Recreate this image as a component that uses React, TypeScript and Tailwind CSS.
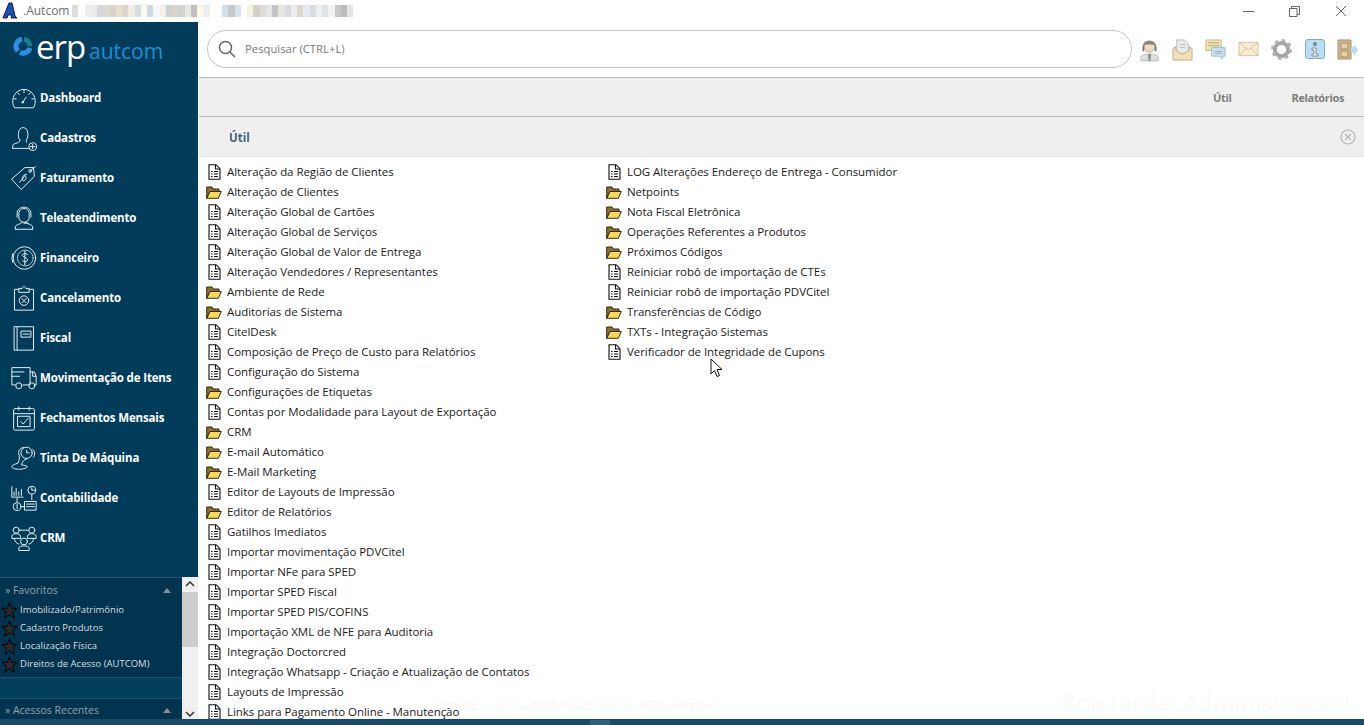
import { FC, ReactNode } from "react";

type ListItem = { label: string; folder?: boolean };

const columnOne: ListItem[] = [
  { label: "Alteração da Região de Clientes" },
  { label: "Alteração de Clientes", folder: true },
  { label: "Alteração Global de Cartões" },
  { label: "Alteração Global de Serviços" },
  { label: "Alteração Global de Valor de Entrega" },
  { label: "Alteração Vendedores / Representantes" },
  { label: "Ambiente de Rede", folder: true },
  { label: "Auditorias de Sistema", folder: true },
  { label: "CitelDesk" },
  { label: "Composição de Preço de Custo para Relatórios" },
  { label: "Configuração do Sistema" },
  { label: "Configurações de Etiquetas", folder: true },
  { label: "Contas por Modalidade para Layout de Exportação" },
  { label: "CRM", folder: true },
  { label: "E-mail Automático", folder: true },
  { label: "E-Mail Marketing", folder: true },
  { label: "Editor de Layouts de Impressão" },
  { label: "Editor de Relatórios", folder: true },
  { label: "Gatilhos Imediatos" },
  { label: "Importar movimentação PDVCitel" },
  { label: "Importar NFe para SPED" },
  { label: "Importar SPED Fiscal" },
  { label: "Importar SPED PIS/COFINS" },
  { label: "Importação XML de NFE para Auditoria" },
  { label: "Integração Doctorcred" },
  { label: "Integração Whatsapp - Criação e Atualização de Contatos" },
  { label: "Layouts de Impressão" },
  { label: "Links para Pagamento Online - Manutenção" },
];

const columnTwo: ListItem[] = [
  { label: "LOG Alterações Endereço de Entrega - Consumidor" },
  { label: "Netpoints", folder: true },
  { label: "Nota Fiscal Eletrônica", folder: true },
  { label: "Operações Referentes a Produtos", folder: true },
  { label: "Próximos Códigos", folder: true },
  { label: "Reiniciar robô de importação de CTEs" },
  { label: "Reiniciar robô de importação PDVCitel" },
  { label: "Transferências de Código", folder: true },
  { label: "TXTs - Integração Sistemas", folder: true },
  { label: "Verificador de Integridade de Cupons" },
];

const Line: FC<{ children: ReactNode }> = ({ children }) => (
  <svg width="26" height="26" viewBox="0 0 30 30" fill="none" stroke="#e4ecf0" strokeWidth="1.150" strokeLinecap="round" strokeLinejoin="round">
    {children}
  </svg>
);

const navItems: { label: string; icon: ReactNode }[] = [
  {
    label: "Dashboard",
    icon: (
      <Line>
        <path d="M4 26 C0 22 1 6 15 5 C29 6 30 22 26 26 Z" />
        <path d="M4 16h2M24 16h2M8 9l1.500 2M22 9l-1.500 2M15 6v3M13.500 20l4-6" />
        <circle cx="13.500" cy="20" r="1" />
      </Line>
    ),
  },
  {
    label: "Cadastros",
    icon: (
      <Line>
        <path d="M2 27v-3c0-3 7-3 8-5 1-1 0-2-1-4-1-3-1-12 5-12s6 9 5 12c-1 2-2 3-1 5" />
        <path d="M2 27h18" />
        <circle cx="25" cy="25" r="4.500" />
        <path d="M25 22.500v5M22.500 25h5" />
      </Line>
    ),
  },
  {
    label: "Faturamento",
    icon: (
      <Line>
        <path d="M1 16 16 3l10 0 1 10-15 15Z" />
        <circle cx="22" cy="7" r="1.500" />
        <path d="M23 6l5-4M18 11c-3-2-7 6-4 7s4-4 3-5M10 20l7-9" />
      </Line>
    ),
  },
  {
    label: "Teleatendimento",
    icon: (
      <Line>
        <path d="M9 10c0-8 12-8 12 0v4c0 4-3 6-6 6s-6-2-6-6Z" />
        <path d="M7 14v-4c0-10 16-10 16 0v4M15 21h5M5 28v-3c0-2 6-3 8-5M25 28v-3c0-2-6-3-8-5M5 28h20" />
      </Line>
    ),
  },
  {
    label: "Financeiro",
    icon: (
      <Line>
        <circle cx="15.500" cy="15" r="13" />
        <circle cx="16.500" cy="15" r="9" strokeDasharray="1 1.500" />
        <path d="M2 10l-1 5 1 5M19 11c-2-2-6-1-6 1s6 2 6 5-4 3-6 1M16 7v16" />
      </Line>
    ),
  },
  {
    label: "Cancelamento",
    icon: (
      <Line>
        <path d="M9 5H4v24h22V5h-5" />
        <path d="M9 8V4h4c0-3 4-3 4 0h4v4Z" />
        <circle cx="15" cy="18" r="5.500" />
        <path d="M12.500 15.500l5 5M17.500 15.500l-5 5" />
      </Line>
    ),
  },
  {
    label: "Fiscal",
    icon: (
      <Line>
        <path d="M4 2h22v27H4ZM7 2v27" />
        <path d="M12 7h11v7H12Z" />
        <path d="M14 10.500h7" />
      </Line>
    ),
  },
  {
    label: "Movimentação de Itens",
    icon: (
      <Line>
        <path d="M5 23H1V3h21v20h-8M1 8h14M1 13h9M22 8h5l2 5v10h-2" />
        <path d="M25 8v5h4" />
        <circle cx="9" cy="24" r="3.500" />
        <circle cx="24" cy="24" r="3.500" />
      </Line>
    ),
  },
  {
    label: "Fechamentos Mensais",
    icon: (
      <Line>
        <rect x="3" y="4" width="24" height="25" rx="2" />
        <path d="M3 10h24M9 2v4M21 2v4" />
        <path d="M8 13h14v12H8Z" />
        <path d="M11 19l3 3 6-7" />
      </Line>
    ),
  },
  {
    label: "Tinta De Máquina",
    icon: (
      <Line>
        <path d="M15 3c-4 0-7 3-6 7 1 3 1 7-1 11-3 1-7 2-7 4s5 3 9 3 9-2 9-3-5-2-7-2c1-4 3-6 6-7" />
        <circle cx="18" cy="9" r="6.500" />
        <path d="M18 6v3h3M25 5c3 2 3 6 1 9" />
      </Line>
    ),
  },
  {
    label: "Contabilidade",
    icon: (
      <Line>
        <path d="M1 2v12h13M3.500 12V8M6 12V4M9 12V8M12 12V5" />
        <circle cx="24" cy="6" r="4.500" />
        <path d="M24 3v3h3M24 11v6M7 15v5M12 25h4" />
        <circle cx="7" cy="25" r="4.500" />
        <path d="M7 22.500v5" />
        <path d="M16 19h13v10H16ZM18 22h9M18 25h9" />
      </Line>
    ),
  },
  {
    label: "CRM",
    icon: (
      <Line>
        <circle cx="6" cy="6" r="3.500" />
        <path d="M1 15v-2c0-2 3-3 5-3s5 1 5 3v2Z" />
        <circle cx="24" cy="6" r="3.500" />
        <path d="M19 15v-2c0-2 3-3 5-3s5 1 5 3v2Z" />
        <circle cx="15" cy="19" r="4" />
        <path d="M9 29v-2c0-2 3-3 6-3s6 1 6 3v2ZM10 6h10M4 16c0 3 2 5 5 6M26 16c0 3-2 5-5 6" />
      </Line>
    ),
  },
];

const favorites = ["Imobilizado/Patrimônio", "Cadastro Produtos", "Localização Física", "Direitos de Acesso (AUTCOM)"];

// mosaico borrado do titulo da janela
const mosaic = [
  "#dcdcdc", "#ffffff", "#eeeeee", "#e8eaec", "#d4d8dc", "#ded9d2", "#d8d4cc", "#e6e0cc", "#dad6cc", "#f0eee4", "#d6dce2", "#fafaf0", "#d0d8e0", "#f6f6f6", "#f4f0e8", "#cfcfcf",
  "#d8d4cc", "#d2d2d2", "#e8e8e0", "#bfbfbf", "#fbf8e8", "#eeeeee", "#ffffff", "#ffffff", "#d0e0ec", "#c9c9c9", "#d4e4f0", "#ffffff", "#f4f2e0", "#d4d0c8", "#dcdcd8", "#e6e6e6",
  "#c4c4c4", "#e6e6e2", "#d8dcdc", "#ececec", "#dcd8cc", "#e6eaee", "#d6dce0", "#f0f0f0", "#dce4ea", "#f2f2f2", "#c8c8c8", "#bbbbbb", "#e4e4e4", "#ffffff",
];

const DocIcon: FC = () => (
  <svg width="13" height="16" viewBox="0 0 13 16" fill="none" stroke="#111" strokeWidth="1.100">
    <path d="M1 .7h7l4 4V15.300H1Z" fill="#fff" />
    <path d="M7.500 .7v4.300H12" />
    <path d="M3 7.500h1.500M6 7.500h4M3 10h1.500M6 10h4M3 12.500h1.500M6 12.500h4" strokeWidth="1.200" />
  </svg>
);

const FolderIcon: FC = () => (
  <svg width="16" height="13" viewBox="0 0 16 13">
    <path d="M.7 12.300V1h5.300l1 2h6v3H4Z" fill="#8c7428" stroke="#1f1a08" strokeWidth=".9" />
    <path d="M.8 12.300 4 5.500h11.300l-3 6.800Z" fill="#fbd85a" stroke="#1f1a08" strokeWidth=".9" />
  </svg>
);

const Row: FC<{ item: ListItem }> = ({ item }) => (
  <li className="flex h-5 items-center">
    <span className="flex w-[21px] justify-center pr-[5px]">{item.folder ? <FolderIcon /> : <DocIcon />}</span>
    <span className="whitespace-nowrap text-[11.500px] tracking-[-0.05px] text-[#1c1c1c]">{item.label}</span>
  </li>
);

const TopIcon: FC<{ children: ReactNode }> = ({ children }) => (
  <span className="flex w-[33px] shrink-0 justify-center">{children}</span>
);

const TopIcons: FC = () => (
  <div className="ml-px flex items-center opacity-80">
    <TopIcon>
      <svg width="21" height="25" viewBox="0 0 24 26">
        <path d="M2 26v-4c0-3 6-4 10-4s10 1 10 4v4Z" fill="#d8d8d8" stroke="#aaa" />
        <path d="M10 18h4l-1 8h-2Z" fill="#777" />
        <circle cx="12" cy="10" r="6" fill="#f1d3a8" stroke="#8a8a8a" />
        <path d="M5 11C4 1 20 1 19 11" fill="none" stroke="#666" strokeWidth="1.500" />
        <path d="M4 10h2v5H4ZM18 10h2v5h-2Z" fill="#555" />
        <path d="M7 5c3-2 7-2 10 0l1 3c-3-1-9-1-12 0Z" fill="#666" />
      </svg>
    </TopIcon>
    <TopIcon>
      <svg width="21" height="23" viewBox="0 0 22 24">
        <path d="M5 2h8l4 4v10H5Z" fill="#e8e8e8" stroke="#aaa" />
        <path d="M1 11v12h20V11l-3-2v4l-7 4-7-4V9Z" fill="#f3d9a4" stroke="#aa9a7a" />
        <path d="M8 7h6M8 10h6" stroke="#aaa" />
      </svg>
    </TopIcon>
    <TopIcon>
      <svg width="21" height="21" viewBox="0 0 22 22">
        <path d="M1 1h16v11H1Z" fill="#f4dba4" stroke="#c0a66a" />
        <path d="M3 4h12M3 7h12" stroke="#a88d50" />
        <path d="M7 9h14v9h-3v3l-3-3H7Z" fill="#bcdcf0" stroke="#8aaac0" />
        <path d="M10 13h8M10 15h8" stroke="#7a9ab0" />
      </svg>
    </TopIcon>
    <TopIcon>
      <svg width="21" height="16" viewBox="0 0 22 16">
        <path d="M1 1h20v14H1Z" fill="#f8e9c2" stroke="#bdb6a0" />
        <path d="M1 1l10 8 10-8M1 15l8-8M21 15l-8-8" fill="none" stroke="#bdb6a0" />
      </svg>
    </TopIcon>
    <TopIcon>
      <svg width="21" height="21" viewBox="0 0 22 22">
        <circle cx="11" cy="11" r="7" fill="none" stroke="#8e8e8e" strokeWidth="4" />
        <circle cx="11" cy="11" r="9.500" fill="none" stroke="#9e9e9e" strokeWidth="3" strokeDasharray="3.500 3.960" />
      </svg>
    </TopIcon>
    <TopIcon>
      <svg width="20" height="20" viewBox="0 0 20 20">
        <rect x=".5" y=".5" width="19" height="19" rx="2.500" fill="#a8d8f4" stroke="#6d97b0" />
        <circle cx="10" cy="5" r="2" fill="#666" />
        <path d="M7 9h4v6h2v2H7v-2h2v-4H7Z" fill="#fff" stroke="#555" strokeWidth=".8" />
      </svg>
    </TopIcon>
    <TopIcon>
      <svg width="21" height="21" viewBox="0 0 21 21">
        <path d="M1 1h13v19H1Z" fill="#c9a86c" stroke="#8c7448" />
        <path d="M4 4h7v6H4ZM4 12h7v6H4Z" fill="#e0c48e" stroke="#8c7448" />
        <path d="M14 8h3V5l4 6-4 6v-3h-3Z" fill="#a8d4ee" />
      </svg>
    </TopIcon>
  </div>
);

const App: FC = () => {
  return (
    <div className="relative flex h-[725px] w-[1364px] flex-col overflow-hidden bg-white font-['Open_Sans','Noto_Sans',sans-serif]">
      {/* ------------- titulo da janela --------------*/}
      <header className="flex h-[22px] shrink-0 items-center bg-white">
        <svg className="ml-[2px]" width="16" height="18" viewBox="0 0 16 18">
          <path d="M1 16 7 1h3l3 13 2 2H9l1-3H6l-1 3Z" fill="#1d4fb8" stroke="#0b1c4a" />
        </svg>
        <span className="ml-[5px] w-[49px] text-[12px] text-[#6e6e6e]">.Autcom</span>
        <div className="flex h-[12px]">
          {mosaic.map((color, i) => (
            <span key={i} className="h-full w-[6.250px]" style={{ backgroundColor: color }} />
          ))}
        </div>
        <div className="ml-auto flex items-center">
          <span className="h-px w-[11px] bg-[#666]" />
          <svg className="ml-[35px]" width="11" height="11" viewBox="0 0 11 11" fill="none" stroke="#666">
            <path d="M.5 2.500h7.500v8H.5ZM2.500 2.500V.5h8v8H8" />
          </svg>
          <svg className="ml-[35px] mr-[17px]" width="12" height="12" viewBox="0 0 12 12" fill="none" stroke="#666">
            <path d="M1 1l10 10M11 1 1 11" />
          </svg>
        </div>
      </header>

      <div className="flex min-h-0 flex-1">
        {/* ------------- menu lateral --------------*/}
        <aside className="flex w-[198px] shrink-0 flex-col bg-[#013d5b]">
          <div className="flex h-[56px] shrink-0 items-start pl-[13px] pt-[10px]">
            <svg width="20" height="20" viewBox="0 0 20 20" className="mt-[4px]">
              <path d="M9 3.200A7 7 0 0 0 5 15" fill="none" stroke="#2a8fe4" strokeWidth="5" />
              <path d="M11 3.200A7 7 0 0 1 16.800 10" fill="none" stroke="#14808e" strokeWidth="5" />
              <path d="M16.800 12A7 7 0 0 1 7 16.500" fill="none" stroke="#2a8fe4" strokeWidth="5" />
            </svg>
            <span className="ml-[3px] w-[53px] text-[33px] font-medium leading-[30px] tracking-[-1px] text-white">erp</span>
            <span className="mt-[7px] text-[21px] leading-[25px] text-[#1b8fd2]">autcom</span>
          </div>
          <nav className="flex flex-col">
            {navItems.map((item) => (
              <div key={item.label} className="flex h-10 items-center pl-[11px]">
                <span className="w-[29px] shrink-0">{item.icon}</span>
                <span className="whitespace-nowrap text-[11.500px] font-bold tracking-[-0.15px] text-white">{item.label}</span>
              </div>
            ))}
          </nav>
          <div className="mt-[19px] flex min-h-0 flex-1">
            <div className="min-w-0 flex-1 border-t border-[#1d536e] bg-[#03344f]">
              <div className="flex h-[23px] items-center pl-[5px] pr-[11px] pt-[2px] text-[10.500px] text-[#8fa3b0]">
                <span>» Favoritos</span>
                <span className="ml-auto h-0 w-0 border-x-[4px] border-b-[5px] border-x-transparent border-b-[#7d8f9b]" />
              </div>
              {favorites.map((name) => (
                <div key={name} className="flex h-[18px] items-center">
                  <svg width="17" height="17" viewBox="0 0 16 16" className="ml-[1px] shrink-0">
                    <path d="M8 1l2 5h5l-4 3.500 1.500 5.500L8 12l-4.500 3L5 9.500 1 6h5Z" fill="#2b2a28" stroke="#0c0c0c" />
                  </svg>
                  <span className="ml-[2px] whitespace-nowrap text-[9.500px] text-[#d4dde2]">{name}</span>
                </div>
              ))}
              <div className="mt-[4px] h-[22px] border-y border-[#1d536e] bg-[#033f5c]" />
              <div className="flex h-[23px] items-center pl-[5px] pr-[11px] text-[10.500px] text-[#8fa3b0]">
                <span>» Acessos Recentes</span>
                <span className="ml-auto h-0 w-0 border-x-[4px] border-b-[5px] border-x-transparent border-b-[#7d8f9b]" />
              </div>
            </div>
            <div className="flex w-4 shrink-0 flex-col bg-[#f0f0f0]">
              <svg width="16" height="15" viewBox="0 0 16 15" fill="none" stroke="#333" strokeWidth="1.500">
                <path d="M4 9l4-4 4 4" />
              </svg>
              <div className="h-[55px] bg-[#cdcdcd]" />
              <svg className="mt-auto" width="16" height="10" viewBox="0 0 16 10" fill="none" stroke="#333" strokeWidth="1.500">
                <path d="M4 3l4 4 4-4" />
              </svg>
            </div>
          </div>
        </aside>

        {/* ------------- area principal --------------*/}
        <main className="flex min-w-0 flex-1 flex-col pl-px">
          <div className="flex h-[55px] shrink-0 items-center pb-px pl-[8px]">
            <div className="flex h-[38px] w-[926px] items-center rounded-full border border-[#c6c6c6] pl-[10px]">
              <svg width="18" height="18" viewBox="0 0 18 18" fill="none" stroke="#666" strokeWidth="1.500">
                <circle cx="7.500" cy="7.500" r="6" />
                <path d="m12 12 5 5" />
              </svg>
              <span className="ml-[9px] text-[11.300px] text-[#7a7a7a]">Pesquisar (CTRL+L)</span>
            </div>
            <TopIcons />
          </div>
          <div className="flex h-10 shrink-0 items-center border-y border-[#b9b9b9] bg-[#efefef] pt-[2px] text-[11px] font-bold tracking-[-0.35px] text-[#7d7d7d]">
            <span className="ml-auto">Útil</span>
            <span className="ml-[60px] mr-5">Relatórios</span>
          </div>
          <div className="flex h-10 shrink-0 items-center border-b border-[#e5e5e5] bg-[#efefef] pl-[30px] pr-2 pt-[3px]">
            <span className="text-[11.500px] font-bold text-[#3f6478]">Útil</span>
            <svg className="mb-[3px] ml-auto" width="16" height="16" viewBox="0 0 16 16" fill="none" stroke="#b5b5b5" strokeWidth="1.200">
              <circle cx="8" cy="8" r="7" />
              <path d="m5 5 6 6M11 5l-6 6" />
            </svg>
          </div>
          <div className="flex min-h-0 flex-1 overflow-hidden pl-[7px] pt-[5px]">
            <ul className="w-[400px] shrink-0">
              {columnOne.map((item) => (
                <Row key={item.label} item={item} />
              ))}
            </ul>
            <ul>
              {columnTwo.map((item) => (
                <Row key={item.label} item={item} />
              ))}
            </ul>
          </div>
        </main>
      </div>
      <footer className="relative h-[6px] shrink-0 bg-[#1a4a66]">
        <div className="absolute left-[590px] top-px h-[5px] w-[20px] bg-[#2f607c]" />
      </footer>

      {/* ------------- marca d'agua e cursor --------------*/}
      <span className="absolute left-[437px] top-[698px] whitespace-nowrap text-[10px] text-[#f6f6f6]">2588303</span>
      <span className="absolute left-[496px] top-[699px] h-[13px] w-[13px] rounded-full bg-[#fcfcfa]" />
      <span className="absolute left-[517px] top-[698px] whitespace-nowrap text-[10.300px] text-[#f6f6f6]">\autcom_46.2.30.74_111_183\autcom.exe</span>
      <span className="absolute left-[1061px] top-[685px] whitespace-nowrap text-[24px] text-[#fafafa]">Boa tarde, Administracao!</span>
      <svg className="absolute left-[710px] top-[358px]" width="15" height="20" viewBox="0 0 15 20">
        <path d="M1 1v15l3.500-3.500 2.500 6 2.500-1-2.500-6h5Z" fill="#fff" stroke="#111" />
      </svg>
    </div>
  );
};
export default App;
